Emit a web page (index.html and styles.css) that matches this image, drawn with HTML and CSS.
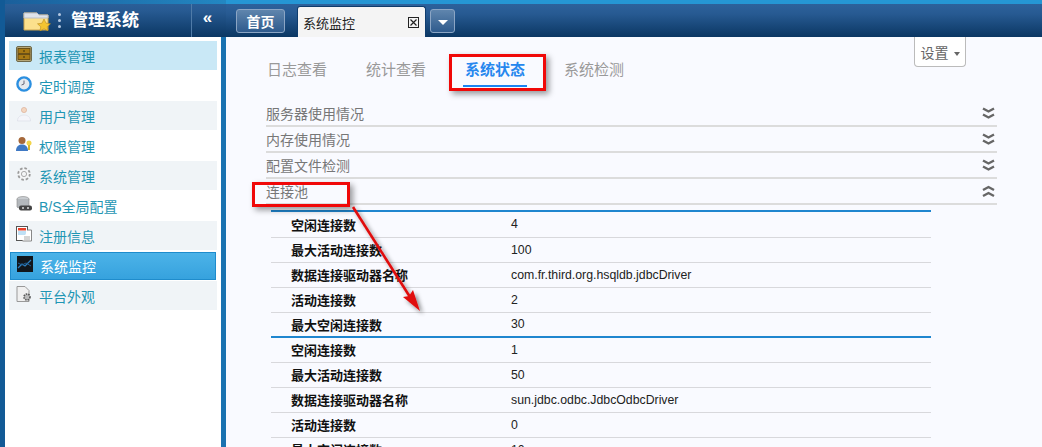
FILE: index.html
```html
<!DOCTYPE html>
<html lang="zh">
<head>
<meta charset="utf-8">
<title>管理系统</title>
<link rel="stylesheet" href="styles.css">
</head>
<body>
<div class="app">
  <aside class="side">
    <header class="brand">
      <svg class="brand-logo" width="28" height="20" viewBox="0 0 28 20"><path d="M1 2h13l2 2h9v15H1z" fill="#fbe08c" stroke="#c9a34f"/><path d="M1 2h13l2 2h9v3H1z" fill="#dfe3ea" stroke="#b9bec8"/><path d="M21 8l2 4.200 4.500.6-3.300 3 .9 4.200-4.100-2.200-4.100 2.200.9-4.200-3.300-3 4.500-.6z" fill="#f4c430" stroke="#b98a1c" stroke-width=".6"/></svg>
      <span class="brand-dots"><i></i><i></i><i></i></span>
      <span class="brand-name">管理系统</span>
      <span class="brand-toggle">«</span>
    </header>
    <nav class="menu">
      <a class="item item-hover"><svg class="ico" viewBox="0 0 16 16"><rect x=".5" y=".5" width="15" height="15" rx="1.500" fill="#b7a878" stroke="#6f6a4a"/><rect x="2" y="2.500" width="12" height="5" fill="#a87a14" stroke="#5b430d" stroke-width=".8"/><rect x="2" y="8.500" width="12" height="5" fill="#a87a14" stroke="#5b430d" stroke-width=".8"/><path d="M7 5h2M7 11h2" stroke="#3d2c08"/></svg>报表管理</a>
      <a class="item"><svg class="ico" viewBox="0 0 16 16"><circle cx="8" cy="8" r="6.600" fill="#e4e9ee" stroke="#2b8fe0" stroke-width="2.400"/><path d="M8 4.500V8l-2.500 1" fill="none" stroke="#667" stroke-width="1"/></svg>定时调度</a>
      <a class="item item-alt"><svg class="ico" viewBox="0 0 16 16"><circle cx="8" cy="4" r="2.600" fill="#f3d6c0" stroke="#d8a890" stroke-width=".6"/><path d="M1.500 15c0-4 3-6 6.500-6s6.500 2 6.500 6z" fill="#f4f5fa" stroke="#d8dbe6" stroke-width=".6"/></svg>用户管理</a>
      <a class="item"><svg class="ico" viewBox="0 0 16 16"><circle cx="6" cy="4.500" r="3.500" fill="#a5683a"/><path d="M0 15c0-5 3-6.500 6-6.500s6 1.500 6 6.500z" fill="#3f79c4"/><circle cx="13" cy="7" r="2.500" fill="#f2d44a"/><path d="M12 9h2v5h-2z" fill="#d8b52e"/></svg>权限管理</a>
      <a class="item item-alt"><svg class="ico" viewBox="0 0 16 16"><circle cx="8" cy="8" r="5.800" fill="#f4f5f6" stroke="#9a9a9a" stroke-width="1.800" stroke-dasharray="2.600 1.900"/><circle cx="8" cy="8" r="2.600" fill="none" stroke="#aaa"/></svg>系统管理</a>
      <a class="item"><svg class="ico" viewBox="0 0 16 16"><ellipse cx="7" cy="3" rx="6" ry="2.500" fill="#c8ccd0" stroke="#888" stroke-width=".6"/><path d="M1 3v8c0 1.400 12 1.400 12 0V3" fill="#b4b8bc" stroke="#888" stroke-width=".6"/><rect x="3" y="9.500" width="13" height="5" rx="2" fill="#444"/><circle cx="7" cy="12" r="1" fill="#ddd"/><circle cx="12" cy="12" r="1" fill="#ddd"/></svg>B/S全局配置</a>
      <a class="item item-alt"><svg class="ico" viewBox="0 0 16 16"><rect x=".5" y=".5" width="11" height="14" fill="#fff" stroke="#555"/><rect x="2" y="2" width="8" height="2.500" fill="#e8402a"/><rect x="2" y="5" width="8" height="4" fill="#bfe0f5"/><path d="M11.500 4h4v11h-9" fill="#fff" stroke="#888"/><path d="M8 11h6M8 13h6" stroke="#aaa"/></svg>注册信息</a>
      <a class="item item-active"><svg class="ico" viewBox="0 0 16 16"><rect width="16" height="16" fill="#11161c"/><path d="M1 12l4-4 3 2 6-6" fill="none" stroke="#2e7fc0" stroke-width="1.200"/><path d="M1 7l4 2 4-2 5 3" fill="none" stroke="#1f5f96"/></svg>系统监控</a>
      <a class="item item-alt"><svg class="ico" viewBox="0 0 16 16"><path d="M1 .5h8l4 4v11H1z" fill="#f0f0f0" stroke="#999"/><circle cx="11" cy="11" r="3" fill="#bbb" stroke="#555" stroke-width="1.600" stroke-dasharray="1.500 1"/></svg>平台外观</a>
    </nav>
  </aside>
  <main class="main">
    <header class="topbar">
      <button class="home">首页</button>
      <div class="tab">
        <span>系统监控</span>
        <svg class="tab-close" width="11" height="11" viewBox="0 0 11 11"><rect x=".5" y=".5" width="10" height="10" fill="none" stroke="#222"/><path d="M2.500 2.500l6 6M8.500 2.500l-6 6" stroke="#222" stroke-width="1.200"/></svg>
      </div>
      <button class="more"><i></i></button>
    </header>
    <section class="content">
      <button class="settings">设置<i></i></button>
      <ul class="subtabs">
        <li>日志查看</li>
        <li>统计查看</li>
        <li class="subtab-on">系统状态</li>
        <li>系统检测</li>
      </ul>
      <div class="acc">
        <div class="acc-row"><span>服务器使用情况</span><svg class="chev" viewBox="0 0 13 13"><path d="M1 1.500l5.500 3 5.500-3M1 7.500l5.500 3 5.500-3" fill="none" stroke="#666" stroke-width="2.400"/></svg></div>
        <div class="acc-row"><span>内存使用情况</span><svg class="chev" viewBox="0 0 13 13"><path d="M1 1.500l5.500 3 5.500-3M1 7.500l5.500 3 5.500-3" fill="none" stroke="#666" stroke-width="2.400"/></svg></div>
        <div class="acc-row"><span>配置文件检测</span><svg class="chev" viewBox="0 0 13 13"><path d="M1 1.500l5.500 3 5.500-3M1 7.500l5.500 3 5.500-3" fill="none" stroke="#666" stroke-width="2.400"/></svg></div>
        <div class="acc-row"><span>连接池</span><svg class="chev" viewBox="0 0 13 13"><path d="M1 5l5.500-3 5.500 3M1 11l5.500-3 5.500 3" fill="none" stroke="#666" stroke-width="2.400"/></svg></div>
      </div>
      <table class="pool">
        <tbody>
          <tr><th>空闲连接数</th><td>4</td></tr>
          <tr><th>最大活动连接数</th><td>100</td></tr>
          <tr><th>数据连接驱动器名称</th><td>com.fr.third.org.hsqldb.jdbcDriver</td></tr>
          <tr><th>活动连接数</th><td>2</td></tr>
          <tr><th>最大空闲连接数</th><td>30</td></tr>
        </tbody>
        <tbody>
          <tr><th>空闲连接数</th><td>1</td></tr>
          <tr><th>最大活动连接数</th><td>50</td></tr>
          <tr><th>数据连接驱动器名称</th><td>sun.jdbc.odbc.JdbcOdbcDriver</td></tr>
          <tr><th>活动连接数</th><td>0</td></tr>
          <tr><th>最大空闲连接数</th><td>10</td></tr>
        </tbody>
      </table>
    </section>
  </main>
  <div class="mark mark-tab"></div>
  <div class="mark mark-pool"></div>
  <svg class="arrow" width="80" height="115" viewBox="0 0 80 115">
    <defs><filter id="sh" x="-30%" y="-30%" width="160%" height="160%"><feDropShadow dx="3" dy="3" stdDeviation="2" flood-color="#000" flood-opacity=".45"/></filter></defs>
    <g filter="url(#sh)"><path d="M3 2L60 92" stroke="#e01010" stroke-width="2.600" fill="none"/><path d="M70 106L53 92l6-1 4-6z" fill="#e01010"/></g>
  </svg>
</div>
</body>
</html>
```
FILE: styles.css
```css
* { box-sizing: border-box; }
html, body { margin: 0; height: 100%; overflow: hidden; }
body { font-family: "Liberation Sans", "Noto Sans CJK SC", sans-serif; background: #f9faff; }

.app { display: flex; position: relative; width: 1042px; height: 447px; overflow: hidden; background: #165f9c; }

.side { width: 226px; flex: none; padding: 0 5px 0 5px; background: linear-gradient(90deg, #125a96 0, #125a96 5px, transparent 5px), linear-gradient(90deg, transparent 216px, #1a72b0 216px); height: 447px; }
.brand { display: flex; align-items: center; height: 37px; padding-top: 4px; border-top: 0; margin-right: -5px; color: #fff; background: linear-gradient(90deg, #1a5f9b 0, #2387c2 100%) top / 100% 4px no-repeat, linear-gradient(180deg, #2d619b 0, #275a92 30%, #0b3763 100%); }
.brand-logo { margin-left: 18px; flex: none; }
.brand-dots { display: flex; flex-direction: column; gap: 3px; margin-left: 7px; }
.brand-dots i { display: block; width: 3px; height: 3px; border-radius: 50%; background: #b5c9e2; }
.brand-name { margin-left: 10px; font-size: 17px; font-weight: 700; width: 110px; white-space: nowrap; line-height: 1; }
.brand-toggle { width: 30px; height: 33px; border-left: 1px solid #4f7ba8; margin-left: 10px; font-size: 17px; font-weight: 700; text-align: center; line-height: 28px; padding-left: 2px; }

.menu { background: #fff; width: 216px; height: 410px; padding: 4px 4px 0; display: flex; flex-direction: column; }
.item { display: flex; align-items: center; height: 30px; flex: none; padding-left: 8px; font-size: 14px; color: #1f96b4; border-bottom: 1px solid #fff; white-space: nowrap; }
.item-hover { background: #c9e8f6; }
.item-alt { background: #f0f4f7; }
.item-active { background: linear-gradient(180deg, #4cb3e8, #36a2de); color: #fff; border: 1px solid #1f8ccc; margin: 1px 1px 1px; height: 28px; padding-left: 7px; }
.ico { width: 16px; height: 16px; margin-right: 6px; flex: none; position: relative; top: -2px; left: -1px; }

.main { flex: 1; min-width: 0; }
.topbar { display: flex; align-items: flex-end; height: 37px; padding-left: 10px; border-top: 4px solid #2596d4; background: linear-gradient(180deg, #2d619b 0, #275a92 30%, #0b3763 100%); }
.home { width: 49px; height: 24px; margin-bottom: 4px; padding: 0; border: 1px solid #8ba5c4; border-radius: 3px; background: linear-gradient(180deg, #5f85ad, #2f5b8d); color: #fff; font: 700 14px "Liberation Sans", "Noto Sans CJK SC", sans-serif; }
.tab { display: flex; align-items: center; justify-content: space-between; width: 129px; height: 31px; margin-left: 12px; padding: 0 6px 0 5px; background: #f4f4f4; border: 1px solid #0e3c6d; border-bottom: 0; border-radius: 3px 3px 0 0; font-size: 13px; color: #222; }
.tab span { white-space: nowrap; }
.more { position: relative; width: 25px; height: 24px; margin: 0 0 4px 4px; padding: 0; border: 1px solid #8ba5c4; border-radius: 3px; background: linear-gradient(180deg, #5f85ad, #2f5b8d); }
.more i { display: block; width: 0; height: 0; margin: 2px auto 0; border: 5px solid transparent; border-top: 5px solid #fff; border-bottom: 0; }

.content { position: relative; height: 410px; padding: 18px 45px 0 40px; background: #f9faff; overflow: hidden; }
.settings { position: absolute; left: 688px; top: 0; width: 52px; height: 30px; padding: 0; background: #fff; border: 1px solid #bbb; border-top: 0; border-radius: 0 0 4px 4px; color: #666; font: 14px "Liberation Sans", "Noto Sans CJK SC", sans-serif; }
.settings i { display: inline-block; width: 0; height: 0; margin-left: 5px; vertical-align: middle; border: 3.500px solid transparent; border-top: 4px solid #666; border-bottom: 0; }

.subtabs { display: flex; gap: 39px; margin: 0 0 14px; padding: 0 0 0 1px; list-style: none; height: 32px; }
.subtabs li { font-size: 15px; line-height: 30px; color: #999; white-space: nowrap; width: 60px; }
.subtabs .subtab-on { position: relative; font-weight: 700; color: #2687ee; }
.subtab-on::after { content: ""; position: absolute; left: -2px; right: -2px; top: 30px; height: 2px; background: #1b84f2; }

.acc { width: 731px; }
.acc-row { display: flex; align-items: center; justify-content: space-between; height: 26px; padding-right: 2px; border-bottom: 2px solid #dcdcdc; font-size: 14px; color: #777; }
.chev { width: 13px; height: 13px; }

.pool { width: 660px; margin: 5px 0 0 5px; border-collapse: collapse; font-size: 12.3px; color: #222; }
.pool tr { height: 25px; }
.pool tbody tr:first-child { height: 26px; }
.pool tbody + tbody tr:first-child { height: 25px; }
.pool tbody { border-top: 2px solid #1f86cf; }
.pool th, .pool td { padding: 0; border-bottom: 1px solid #d8d8dc; text-align: left; }
.pool tbody tr:last-child th, .pool tbody tr:last-child td { border-bottom: 0; }
.pool th { width: 240px; padding-left: 20px; font-size: 13px; font-weight: 700; color: #111; }

.mark { position: absolute; border: 3px solid #f00808; box-shadow: 3px 3px 6px rgba(0,0,0,.4); }
.mark-tab { left: 449px; top: 54px; width: 97px; height: 37px; }
.mark-pool { left: 252px; top: 182px; width: 98px; height: 25px; }
.arrow { position: absolute; left: 350px; top: 205px; }
```
